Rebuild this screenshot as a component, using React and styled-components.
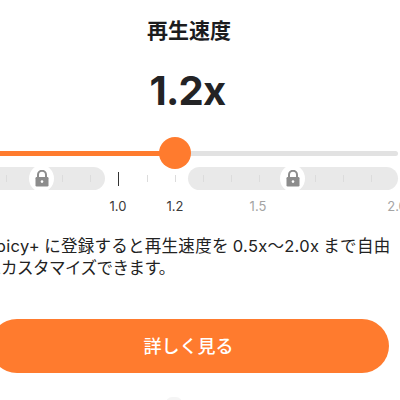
import React from "react";
import styled, { createGlobalStyle } from "styled-components";

const Global = createGlobalStyle`
  html, body { margin: 0; padding: 0; background: #fff; }
  body { font-family: Inter, "Noto Sans CJK JP", sans-serif; }
`;
const Page = styled.div`
  width: 400px; height: 400px; overflow: hidden; background: #fff;
  display: flex; flex-direction: column; position: relative;
`;
const Title = styled.div`
  margin-top: 17px; width: 378px; text-align: center;
  font: 700 21px/24px "Noto Sans CJK JP", sans-serif; color: #1c1c1e;
`;
const Speed = styled.div`
  margin-top: 22px; width: 375px; text-align: center;
  font: 700 40px/56px Inter, sans-serif; letter-spacing: -0.8px; color: #232325;
`;
const Slider = styled.div`
  margin-top: 32px; height: 5px; width: 398px; background: #e2e2e2; border-radius: 3px; position: relative; flex: none;
`;
const Fill = styled.div`
  height: 100%; background: #ff7b2e; width: 175px;
`;
const Thumb = styled.div`
  position: absolute; left: 159px; top: -14px; width: 32px; height: 32px; border-radius: 50%; background: #ff7b2e;
`;
const TickRow = styled.div`
  margin: 11px 0 0 -40px; height: 23px; display: flex; align-items: center; flex: none; width: 438px;
`;
const Band = styled.div`
  height: 23px; background: #e9e9e9; border-radius: 12px; position: relative;
  display: flex; align-items: center; gap: 27px; flex: none;
  width: ${p => p.$w}px; padding-left: ${p => p.$pad}px; box-sizing: border-box;
`;
const FreeTicks = styled.div`
  display: flex; align-items: center; gap: 27.5px; padding: 0 12px 0 13px; flex: none;
`;
const Tick = styled.i`
  display: block; flex: none; width: 1px; height: ${p => p.$major ? 14 : 7}px;
  background: ${p => p.$major ? "#333" : "#dcdcdc"};
`;
const LockDot = styled.div`
  position: absolute; top: -2px; left: ${p => p.$x}px; width: 25px; height: 27px;
  border-radius: 50%; background: #fff; display: flex; align-items: center; justify-content: center;
`;
const Labels = styled.div`
  display: grid; grid-template-columns: 36px 78px 88px 190px; height: 16px; margin-top: 8px; padding-left: 100px; flex: none;
`;
const Lab = styled.span`
  text-align: center;
  font: 400 13px/16px Inter, sans-serif; color: ${p => p.$dim ? "#a4a4a4" : "#3a3a3a"};
`;
const Body = styled.div`
  margin: 21px 0 0 -15px; width: 420px; flex: none; display: flex; flex-direction: column;
`;
const BodyLine = styled.span`
  white-space: nowrap;
  font: 400 16.5px/22px Inter, "Noto Sans CJK JP", sans-serif; color: #222;
  letter-spacing: ${p => p.$tight ? "-0.5px" : "0.28px"};
  word-spacing: -0.8px;
`;
const Cta = styled.button`
  margin: 40px 0 0 -10px; width: 399px; height: 54px; border: 0; border-radius: 27px; background: #ff7b2e;
  color: #fff; font: 500 18px/24px "Noto Sans CJK JP", sans-serif; flex: none; padding: 0 2px 2px 0;
`;
const Peek = styled.div`
  position: absolute; left: 166px; top: 397px; width: 16px; height: 8px; border-radius: 6px 6px 0 0; background: #f5f5f5;
`;

const Lock = () => (
  <svg width="14" height="17" viewBox="0 0 14 17">
    <path d="M3 8V4.8a4 4 0 0 1 8 0V8" fill="none" stroke="#8c8c8c" strokeWidth="2" />
    <rect x="0.5" y="7" width="13" height="9.5" rx="1.2" fill="#8c8c8c" />
    <circle cx="7" cy="11.6" r="1.3" fill="#fff" />
  </svg>
);

export default function App() {
  return (
    <Page>
      <Global />
      <Title>再生速度</Title>
      <Speed>1.2x</Speed>
      <Slider>
        <Fill />
        <Thumb />
      </Slider>
      <TickRow>
        <Band $w={145} $pad={46}>
          {[0, 1, 2, 3].map(i => <Tick key={i} />)}
          <LockDot $x={69}><Lock /></LockDot>
        </Band>
        <FreeTicks>
          <Tick $major />
          <Tick />
          <Tick />
        </FreeTicks>
        <Band $w={210} $pad={15}>
          {[0, 1, 2, 3, 4, 5, 6].map(i => <Tick key={i} />)}
          <LockDot $x={92}><Lock /></LockDot>
        </Band>
      </TickRow>
      <Labels>
        <Lab>1.0</Lab>
        <Lab>1.2</Lab>
        <Lab $dim>1.5</Lab>
        <Lab $dim>2.0</Lab>
      </Labels>
      <Body>
        <BodyLine>Spicy+ に登録すると再生速度を 0.5x〜2.0x まで自由</BodyLine>
        <BodyLine $tight>にカスタマイズできます。</BodyLine>
      </Body>
      <Cta>詳しく見る</Cta>
      <Peek />
    </Page>
  );
}
